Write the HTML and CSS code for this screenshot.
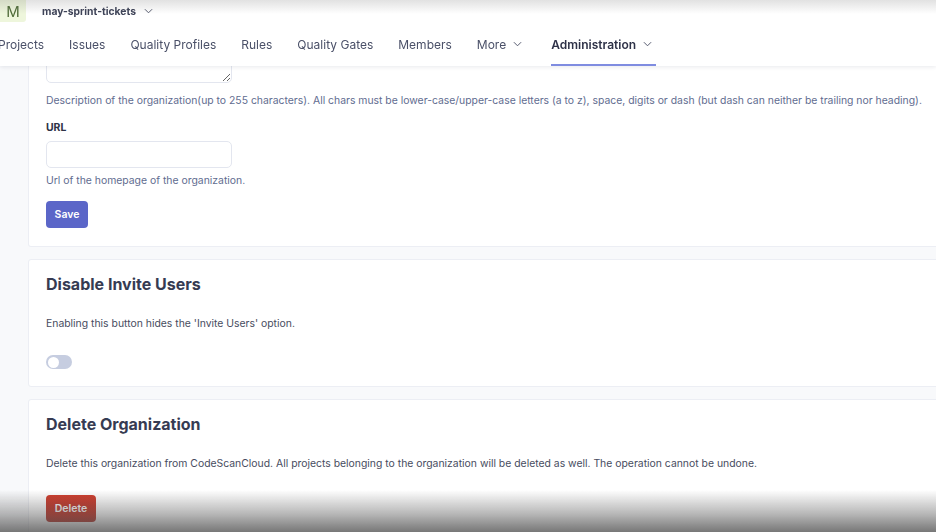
FILE: index.html
```html
<!DOCTYPE html>
<html lang="en">
<head>
<meta charset="utf-8">
<title>Organization settings</title>
<link rel="stylesheet" href="styles.css">
</head>
<body>
<header class="topbar">
  <div class="org-row">
    <span class="avatar">M</span>
    <span class="org-name">may-sprint-tickets</span>
    <svg class="chev chev-org" viewBox="0 0 10 6" width="9" height="6"><path d="M1 1l4 4 4-4" fill="none" stroke="#555a6e" stroke-width="1.1"/></svg>
  </div>
  <nav class="nav">
    <a class="nav-item">Projects</a>
    <a class="nav-item">Issues</a>
    <a class="nav-item">Quality Profiles</a>
    <a class="nav-item">Rules</a>
    <a class="nav-item">Quality Gates</a>
    <a class="nav-item">Members</a>
    <a class="nav-item nav-more">More <svg class="chev" viewBox="0 0 10 6" width="9" height="6"><path d="M1 1l4 4 4-4" fill="none" stroke="#555a6e" stroke-width="1.1"/></svg></a>
    <a class="nav-item nav-active">Administration <svg class="chev" viewBox="0 0 10 6" width="9" height="6"><path d="M1 1l4 4 4-4" fill="none" stroke="#555a6e" stroke-width="1.1"/></svg></a>
  </nav>
</header>

<main class="main">
  <section class="card card-first">
    <textarea class="textarea"></textarea>
    <p class="help">Description of the organization(up to 255 characters). All chars must be lower-case/upper-case letters (a to z), space, digits or dash (but dash can neither be trailing nor heading).</p>
    <label class="label">URL</label>
    <input class="input" type="text">
    <p class="help help-url">Url of the homepage of the organization.</p>
    <button class="btn btn-save">Save</button>
  </section>

  <section class="card">
    <h2 class="card-title">Disable Invite Users</h2>
    <p class="card-text">Enabling this button hides the 'Invite Users' option.</p>
    <span class="toggle"><span class="knob"></span></span>
  </section>

  <section class="card card-last">
    <h2 class="card-title">Delete Organization</h2>
    <p class="card-text">Delete this organization from CodeScanCloud. All projects belonging to the organization will be deleted as well. The operation cannot be undone.</p>
    <button class="btn btn-delete">Delete</button>
  </section>
</main>

<div class="vignette-top"></div>
<div class="vignette-bottom"></div>
</body>
</html>
```

FILE: styles.css
```css
* { box-sizing: border-box; }
html, body {
  margin: 0;
  padding: 0;
  height: 100%;
  overflow: hidden;
}
body {
  background: #f8f9fb;
  font-family: Inter, "Noto Sans", "Liberation Sans", sans-serif;
  color: #3a3f55;
}

.topbar {
  position: fixed;
  top: 0;
  left: 0;
  right: 0;
  height: 66px;
  background: #ffffff;
  box-shadow: 0 1px 4px rgba(30, 40, 70, 0.10);
  z-index: 5;
}
.org-row {
  display: flex;
  align-items: center;
  height: 22px;
}
.avatar {
  width: 26px;
  height: 22px;
  background: #eef6dc;
  color: #4d6a36;
  font-size: 15px;
  display: flex;
  align-items: center;
  justify-content: center;
  border-radius: 0 0 3px 0;
}
.org-name {
  margin-left: 16px;
  font-size: 10.3px;
  font-weight: 700;
  color: #3d4257;
}
.chev-org { margin-left: 8px; }

.nav {
  display: flex;
  align-items: stretch;
  height: 44px;
  margin-left: -2px;
  gap: 25px;
}
.nav-item {
  display: flex;
  align-items: center;
  gap: 7px;
  font-size: 12px;
  color: #4a5068;
  height: 100%;
  padding-top: 2px;
  border-bottom: 2px solid transparent;
}
.nav-more { margin-right: 4px; }
.nav-active {
  font-weight: 600;
  color: #2e3248;
  border-bottom-color: #7f8ce0;
  padding-right: 4px;
}

.main {
  display: flex;
  flex-direction: column;
  gap: 12px;
  padding-left: 28px;
  width: 1040px;
}
.card {
  background: #ffffff;
  border: 1px solid #eceef4;
  border-radius: 3px;
  padding: 14px 17px 17px 17px;
  display: flex;
  flex-direction: column;
  align-items: flex-start;
}
.card-first {
  padding-top: 10px;
  padding-bottom: 18px;
  border-top: none;
}
.textarea {
  width: 186px;
  height: 73px;
  border: 1px solid #e3e6ef;
  border-radius: 5px;
  background: #fff;
  margin: 0;
  font: inherit;
}
.help {
  margin: 10px 0 0;
  font-size: 10.4px;
  line-height: 16px;
  color: #5f6c90;
}
.help-url { margin-top: 5px; }
.label {
  margin-top: 12px;
  font-size: 10.4px;
  font-weight: 700;
  color: #2e3246;
  line-height: 14px;
}
.input {
  margin-top: 6px;
  width: 186px;
  height: 27px;
  border: 1px solid #e3e6ef;
  border-radius: 5px;
  background: #fff;
}
.btn {
  margin-top: 12px;
  border: none;
  border-radius: 4px;
  height: 27px;
  font-family: inherit;
  font-size: 10.5px;
  font-weight: 600;
  color: #ffffff;
  padding: 0 9px;
}
.btn-save {
  background: #5b66c8;
  width: 42px;
  padding: 0;
}
.card-title {
  margin: 0;
  font-size: 16px;
  line-height: 20px;
  font-weight: 650;
  color: #363b52;
}
.card-text {
  margin: 22px 0 0;
  font-size: 10.4px;
  line-height: 16px;
  color: #474c60;
}
.toggle {
  margin-top: 23px;
  width: 26px;
  height: 14px;
  border-radius: 7px;
  background: #c6cde0;
  display: flex;
  align-items: center;
  padding-left: 2px;
}
.knob {
  width: 11px;
  height: 11px;
  border-radius: 50%;
  background: #ffffff;
}
.card-last .btn { margin-top: 23px; }
.btn-delete {
  background: linear-gradient(#d03b2b, #b42c22);
  width: 50px;
  padding: 0;
}

.vignette-top {
  position: fixed;
  top: 0; left: 0; right: 0;
  height: 14px;
  background: linear-gradient(rgba(120,120,120,0.22), rgba(120,120,120,0));
  pointer-events: none;
  z-index: 10;
}
.vignette-bottom {
  position: fixed;
  bottom: 0; left: 0; right: 0;
  height: 42px;
  background: linear-gradient(rgba(90,90,90,0), rgba(90,90,90,0.42) 55%, rgba(85,85,85,0.8));
  pointer-events: none;
  z-index: 10;
}
```
